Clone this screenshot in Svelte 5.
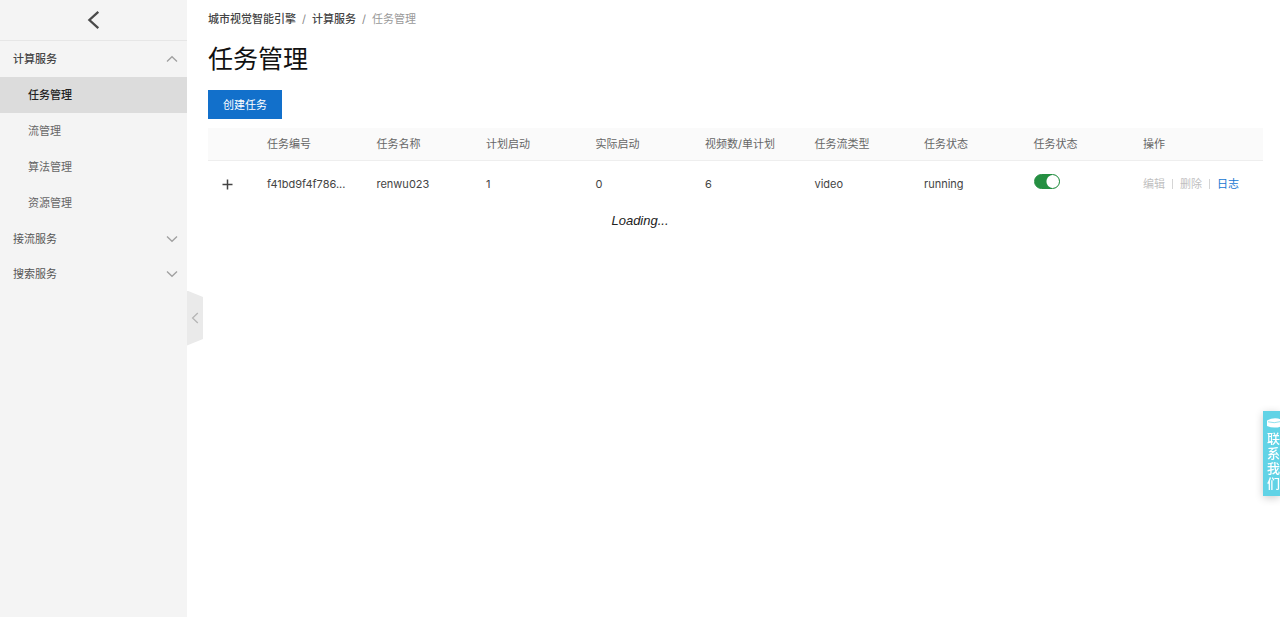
<script>
    let running = true;
    let openGroup = '计算服务';

    const groups = [
        { name: '计算服务', items: ['任务管理', '流管理', '算法管理', '资源管理'] },
        { name: '接流服务', items: [] },
        { name: '搜索服务', items: [] }
    ];
    const current = '任务管理';

    const columns = ['任务编号', '任务名称', '计划启动', '实际启动', '视频数/单计划', '任务流类型', '任务状态', '任务状态'];
    const tasks = [
        { cells: ['f41bd9f4f786...', 'renwu023', '1', '0', '6', 'video', 'running'] }
    ];

    function toggle(name) {
        openGroup = openGroup === name ? '' : name;
    }
</script>

<div class="layout">
    <aside class="sidebar">
        <button class="back" aria-label="返回">
            <svg width="14" height="18" viewBox="0 0 14 18"><path d="M11.3 .9 2.4 9l8.9 8.1" fill="none" stroke="#4a4a4a" stroke-width="2.3" /></svg>
        </button>
        <nav>
            {#each groups as group}
                <button class="group" class:open={openGroup === group.name} on:click={() => toggle(group.name)}>
                    <span>{group.name}</span>
                    <svg width="12" height="8" viewBox="0 0 12 8"><path d="M1 1.5 6 6.3 11 1.5" fill="none" stroke="#a0a0a0" stroke-width="1.3" /></svg>
                </button>
                {#if openGroup === group.name}
                    {#each group.items as item}
                        <a href="#{item}" class="item" class:active={item === current}>{item}</a>
                    {/each}
                {/if}
            {/each}
        </nav>
        <button class="collapse" aria-label="收起">
            <svg width="8" height="12" viewBox="0 0 8 12"><path d="M6.8 1 1.6 6l5.2 5" fill="none" stroke="#b5b5b5" stroke-width="1.3" /></svg>
        </button>
    </aside>

    <main>
        <div class="breadcrumb">
            <a href="#home">城市视觉智能引擎</a>
            <span class="slash">/</span>
            <a href="#compute">计算服务</a>
            <span class="slash">/</span>
            <span class="here">任务管理</span>
        </div>
        <h1>任务管理</h1>
        <button class="create">创建任务</button>

        <table>
            <thead>
                <tr>
                    <th class="expand"></th>
                    {#each columns as column}
                        <th>{column}</th>
                    {/each}
                    <th class="actions">操作</th>
                </tr>
            </thead>
            <tbody>
                {#each tasks as task}
                    <tr>
                        <td class="expand">
                            <button class="plus" aria-label="展开">
                                <svg width="11" height="11" viewBox="0 0 11 11"><path d="M5.5 .5v10M.5 5.5h10" stroke="#444" stroke-width="1.5" /></svg>
                            </button>
                        </td>
                        {#each task.cells as cell}
                            <td>{cell}</td>
                        {/each}
                        <td><input class="switch" type="checkbox" aria-label="任务状态" bind:checked={running}></td>
                        <td class="actions">
                            <div class="links">
                                <button disabled>编辑</button>
                                <i></i>
                                <button disabled>删除</button>
                                <i></i>
                                <a href="#log">日志</a>
                            </div>
                        </td>
                    </tr>
                {/each}
            </tbody>
        </table>
        <p class="loading">Loading...</p>
    </main>

    <button class="contact">
        <svg width="14" height="10" viewBox="0 0 14 10"><path d="M0 2.4Q7-1.2 14 1.4v7Q7 11 0 8Z" fill="#fff" /><path d="M1 3.8Q7 5.7 14 3.5" fill="none" stroke="#61d3e6" stroke-width=".7" /></svg>
        <span>联系我们</span>
    </button>
</div>

<style>
    :global(body) {
        margin: 0;
        background: #fff;
    }

    .layout {
        display: flex;
        min-height: 100vh;
        font-family: Inter, "Noto Sans CJK SC", sans-serif;
        font-size: 11px;
        line-height: 16px;
        color: #444;
    }

    button {
        font: inherit;
        color: inherit;
        border: none;
        padding: 0;
        background: none;
        cursor: pointer;
    }

    a {
        color: inherit;
        text-decoration: none;
    }

    svg {
        display: block;
    }

    .sidebar {
        position: relative;
        flex: none;
        box-sizing: border-box;
        width: 187px;
        background: #f4f4f4;
    }

    .back {
        display: flex;
        align-items: center;
        justify-content: center;
        width: 100%;
        height: 41px;
        border-bottom: 1px solid #e6e6e6;
    }

    .group {
        display: flex;
        align-items: center;
        justify-content: space-between;
        width: 100%;
        height: 35px;
        padding: 0 9px 0 13px;
        color: #555;
    }

    .group.open {
        height: 36px;
        font-weight: 500;
        color: #444;
    }

    .group.open svg {
        transform: rotate(180deg);
    }

    .item {
        display: block;
        padding: 10px 28px;
        color: #666;
    }

    .item.active {
        background: #dcdcdc;
        color: #222;
        font-weight: 500;
    }

    .collapse {
        position: absolute;
        left: 100%;
        top: calc(50% - 18px);
        display: flex;
        align-items: center;
        justify-content: center;
        width: 16px;
        height: 55px;
        background: #eaeaea;
        clip-path: polygon(0 0, 100% 12%, 100% 88%, 0 100%);
    }

    main {
        flex: 1;
        min-width: 0;
        padding: 11px 17px 24px 21px;
    }

    .breadcrumb {
        display: flex;
        gap: 6px;
        font-weight: 500;
    }

    .slash {
        color: #888;
        font-weight: 400;
    }

    .here {
        color: #999;
        font-weight: 400;
    }

    h1 {
        margin: 16px 0 15px;
        font-size: 25px;
        line-height: 32px;
        font-weight: 400;
        color: #111;
    }

    .create {
        display: block;
        height: 29px;
        padding: 0 15px;
        background: #1270cb;
        color: #fff;
    }

    table {
        width: 100%;
        margin-top: 9px;
        table-layout: fixed;
        border-collapse: collapse;
    }

    th,
    td {
        padding: 0 0 0 14px;
        text-align: left;
        font-weight: 400;
        white-space: nowrap;
    }

    th {
        height: 32px;
        background: #fafafa;
        border-bottom: 1px solid #eee;
        color: #666;
    }

    td {
        height: 46px;
    }

    .expand {
        width: 31px;
    }

    .actions {
        width: 120px;
    }

    .plus {
        display: block;
    }

    .switch {
        appearance: none;
        display: block;
        width: 26px;
        height: 15px;
        margin: 0 0 5px;
        border: 1px solid #258f42;
        border-radius: 8px;
        background: radial-gradient(circle at 18px 50%, #fff 6px, #258f42 7px);
    }

    .switch:not(:checked) {
        border-color: #aaa;
        background: radial-gradient(circle at 6px 50%, #fff 6px, #aaa 7px);
    }

    .links {
        display: flex;
        align-items: center;
        gap: 7px;
    }

    .links button {
        color: #bfbfbf;
        cursor: default;
    }

    .links i {
        width: 1px;
        height: 10px;
        background: #d5d5d5;
    }

    .links a {
        color: #1677d2;
    }

    /* centred on the whole window, sidebar included */
    .loading {
        margin: 5px -17px 0 -208px;
        text-align: center;
        font-family: "Liberation Sans", Arial, sans-serif;
        font-size: 13px;
        line-height: 18px;
        font-style: italic;
        color: #222;
    }

    .contact {
        position: fixed;
        right: 0;
        bottom: 121px;
        display: flex;
        flex-direction: column;
        align-items: center;
        gap: 3px;
        width: 17px;
        padding: 7px 0 5px 4px;
        background: #61d3e6;
        box-shadow: 0 2px 8px rgba(0, 0, 0, .2);
        color: #fff;
        font-size: 13px;
        font-weight: 500;
        line-height: 15px;
    }

    .contact span {
        width: 13px;
        overflow-wrap: anywhere;
    }
</style>
